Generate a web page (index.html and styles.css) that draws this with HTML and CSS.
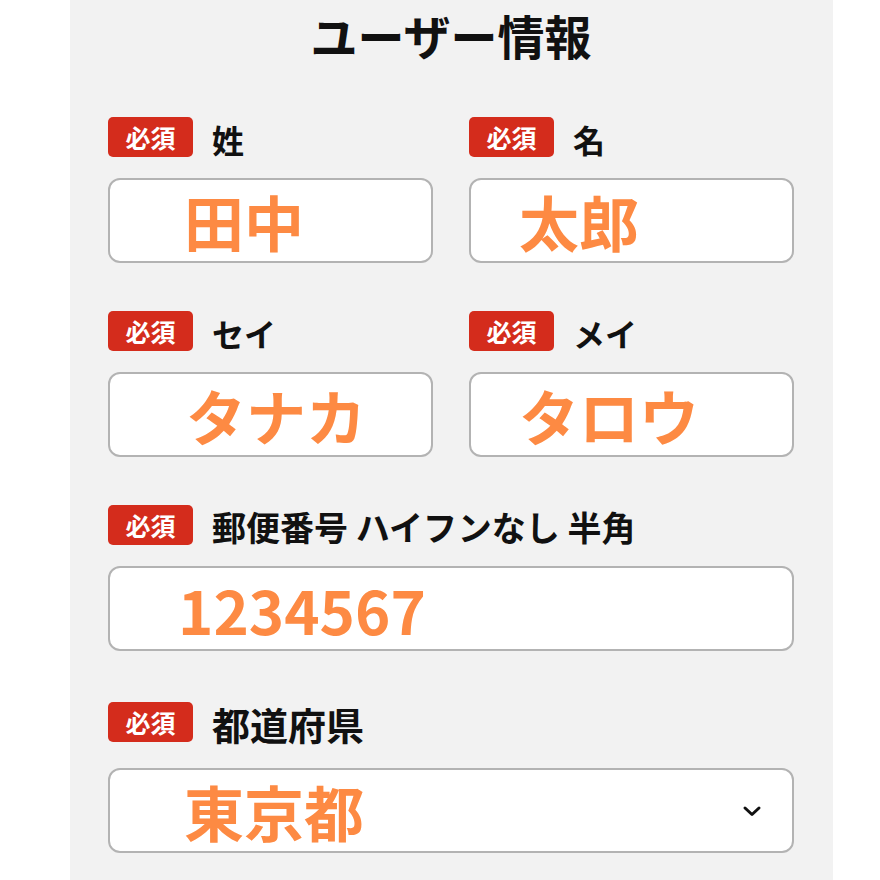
FILE: index.html
```html
<!DOCTYPE html>
<html lang="ja">
<head>
<meta charset="utf-8">
<link rel="stylesheet" href="styles.css">
</head>
<body>
<div class="panel">
  <h1 class="title">ユーザー情報</h1>
  <div class="row two">
    <div class="field">
      <div class="label"><span class="badge">必須</span><span class="label-text">姓</span></div>
      <div class="box pad-78">田中</div>
    </div>
    <div class="field">
      <div class="label"><span class="badge">必須</span><span class="label-text">名</span></div>
      <div class="box pad-51">太郎</div>
    </div>
  </div>
  <div class="row two">
    <div class="field">
      <div class="label"><span class="badge">必須</span><span class="label-text">セイ</span></div>
      <div class="box pad-80">タナカ</div>
    </div>
    <div class="field">
      <div class="label"><span class="badge">必須</span><span class="label-text">メイ</span></div>
      <div class="box pad-51">タロウ</div>
    </div>
  </div>
  <div class="row">
    <div class="field">
      <div class="label"><span class="badge">必須</span><span class="label-text label-long">郵便番号 ハイフンなし 半角</span></div>
      <div class="box pad-72">1234567</div>
    </div>
  </div>
  <div class="row last">
    <div class="field">
      <div class="label"><span class="badge">必須</span><span class="label-text label-large">都道府県</span></div>
      <div class="box select pad-78">東京都
        <svg class="chevron" width="22" height="16" viewBox="0 0 22 16"><path d="M4 5 L11 11.5 L18 5" fill="none" stroke="#111" stroke-width="3" stroke-linecap="round" stroke-linejoin="round"/></svg>
      </div>
    </div>
  </div>
</div>
</body>
</html>
```
FILE: styles.css
```css
html, body {
  margin: 0;
  padding: 0;
  background: #ffffff;
}
body {
  font-family: "Noto Sans CJK JP", "Noto Sans", sans-serif;
}
.panel {
  margin-left: 70px;
  width: 763px;
  min-height: 880px;
  background: #f2f2f2;
  padding: 5px 39px 0 38px;
  box-sizing: border-box;
}
.title {
  margin: 0;
  height: 60px;
  line-height: 60px;
  font-size: 47px;
  font-weight: 700;
  color: #111;
  text-align: center;
}
.row {
  margin-top: 52px;
  display: grid;
  grid-template-columns: 1fr;
}
.row + .row {
  margin-top: 48px;
}
.row.last {
  margin-top: 51px;
}
.row.two {
  grid-template-columns: 1fr 1fr;
  column-gap: 36px;
}
.field {
  display: flex;
  flex-direction: column;
  gap: 21px;
}
.row.last .field {
  gap: 26px;
}
.label {
  display: flex;
  align-items: center;
  height: 40px;
}
.badge {
  flex: none;
  width: 85px;
  height: 40px;
  border-radius: 5px;
  background: #d42c1c;
  color: #fff;
  font-size: 25px;
  font-weight: 700;
  display: flex;
  align-items: center;
  justify-content: center;
  line-height: 1;
}
.label-text {
  margin-left: 19px;
  font-size: 32px;
  font-weight: 700;
  color: #111;
  line-height: 1;
  padding-top: 4px;
  white-space: nowrap;
}
.label-long {
  font-size: 34px;
}
.label-large {
  font-size: 38px;
}
.box {
  height: 85px;
  box-sizing: border-box;
  border: 2px solid #b3b3b3;
  border-radius: 12px;
  background: #fff;
  display: flex;
  align-items: center;
  font-size: 60px;
  font-weight: 700;
  color: #fd8a43;
  line-height: 1;
}
.pad-78 { padding-left: 74px; }
.pad-51 { padding-left: 48px; }
.pad-80 { padding-left: 76px; }
.pad-72 { padding-left: 68px; }
.select {
  justify-content: space-between;
  padding-right: 29px;
}
.chevron {
  display: block;
}
```
